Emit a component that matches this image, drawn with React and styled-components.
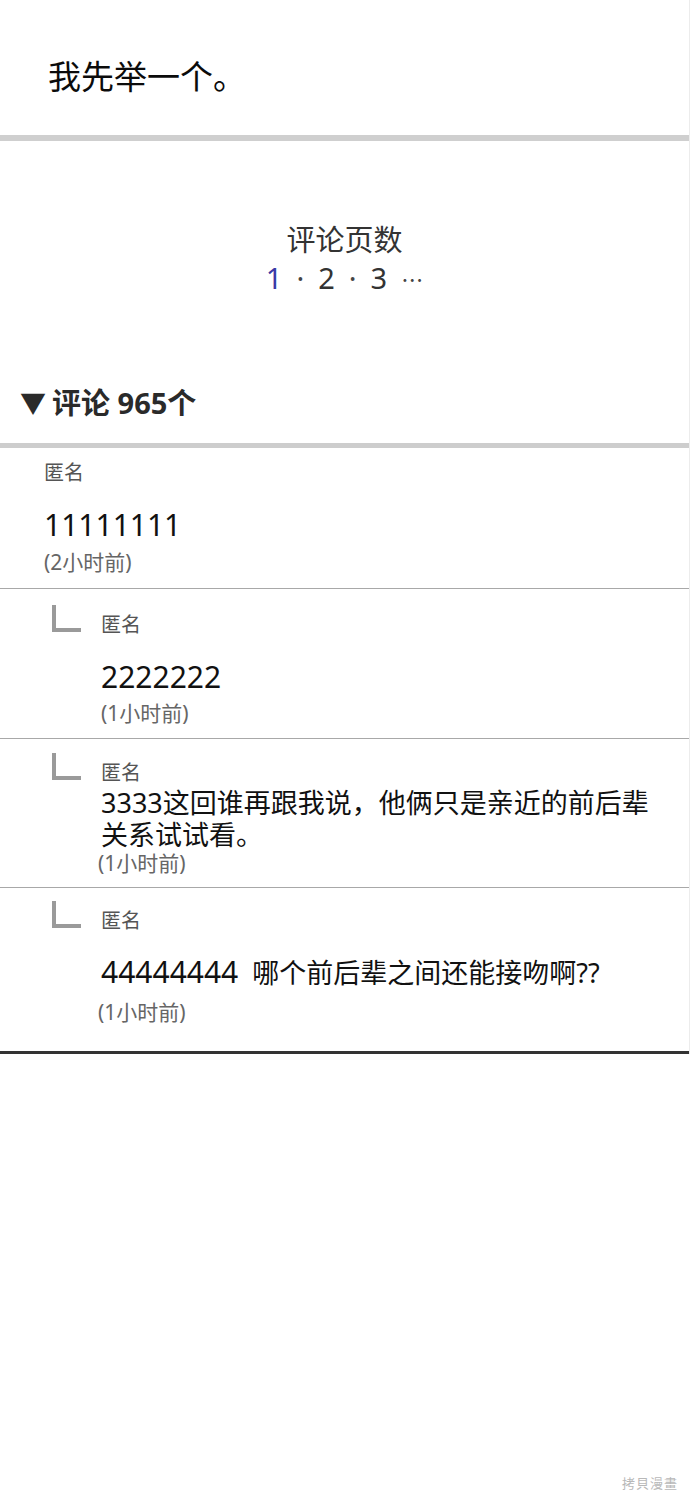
import React from "react";
import styled, { createGlobalStyle } from "styled-components";

// ---------- STYLES ----------
const Global = createGlobalStyle`
  html, body {
    margin: 0;
    padding: 0;
    background: #fff;
  }
  body {
    font-family: "Noto Sans", "Noto Sans CJK SC", sans-serif;
    color: #111;
  }
`;

const Page = styled.div`
  position: relative;
  width: 690px;
  min-height: 1506px;
  background: #fff;
`;

const Panel = styled.div`
  border-right: 1px solid #ececec;
`;

const Post = styled.div`
  padding: 55px 0 40px 48px;
  font-family: "Noto Sans CJK SC", sans-serif;
  font-size: 33px;
  line-height: 40px;
  color: #0b0b0b;
  border-bottom: 6px solid #cfcfcf;
`;

const Pager = styled.div`
  padding: 80px 0 20px;
  border-bottom: 5px solid #cdcdcd;
`;

const PagerTitle = styled.div`
  text-align: center;
  font-size: 29px;
  line-height: 38px;
  color: #333;
`;

const PageNums = styled.div`
  display: flex;
  justify-content: center;
  align-items: center;
  gap: 14px;
  font-size: 29px;
  line-height: 38px;
  color: #333;
`;

const PageNum = styled.span`
  color: ${(p) => (p.$active ? "#3a3aa6" : "#333")};
`;

const Dot = styled.span`
  color: #444;
`;

const More = styled.span`
  font-family: "Noto Sans CJK SC", sans-serif;
  font-size: 22px;
  color: #444;
`;

const Heading = styled.h2`
  margin: 86px 0 0 20px;
  font-size: 29px;
  line-height: 40px;
  font-weight: 700;
  color: #2a2a2a;
  display: flex;
  align-items: center;
  gap: 6px;
`;

const Arrow = styled.span`
  font-size: 26px;
`;

const Comment = styled.div`
  padding: ${(p) => p.$top}px 0 ${(p) => p.$bottom}px ${(p) => (p.$reply ? 52 : 44)}px;
  border-bottom: ${(p) => (p.$last ? "3px solid #333" : "1.5px solid #a8a8a8")};
`;

const Head = styled.div`
  display: flex;
  align-items: flex-end;
`;

const Marker = styled.span`
  width: 25px;
  height: 23px;
  border-left: 4px solid #9a9a9a;
  border-bottom: 4px solid #9a9a9a;
  margin: 0 20px 6px 0;
`;

const Name = styled.div`
  font-size: 20px;
  line-height: 26px;
  color: #555;
`;

const Body = styled.div`
  padding-left: ${(p) => (p.$reply ? 49 : 0)}px;
`;

const Text = styled.div`
  margin-top: ${(p) => p.$gap}px;
  max-width: ${(p) => p.$max || 600}px;
  font-size: ${(p) => p.$size}px;
  line-height: ${(p) => p.$lh}px;
  color: #111;
`;

const Num = styled.span`
  font-size: 30px;
  margin-right: 14px;
`;

const Time = styled.div`
  margin-top: ${(p) => p.$gap}px;
  margin-left: ${(p) => p.$shift || 0}px;
  font-size: 21px;
  line-height: ${(p) => p.$lh || 26}px;
  color: #666;
`;

const Watermark = styled.div`
  position: absolute;
  right: 12px;
  bottom: 14px;
  font-family: "Noto Sans CJK TC", sans-serif;
  font-size: 13px;
  letter-spacing: 1px;
  color: #b8b8b8;
`;

// ---------- DATA ----------
const comments = [
  { id: 1, reply: false, top: 12, bottom: 13, text: "11111111", size: 30, lh: 40, gap: 19, time: "(2小时前)", tgap: 4 },
  { id: 2, reply: true, top: 16, bottom: 12, text: "2222222", size: 30, lh: 40, gap: 19, time: "(1小时前)", tgap: 3 },
  { id: 3, reply: true, top: 14, bottom: 13, text: "3333这回谁再跟我说，他俩只是亲近的前后辈关系试试看。", size: 27, lh: 32, gap: 1, max: 556, time: "(1小时前)", tgap: 1, tlh: 22, shift: -3 },
  { id: 4, reply: true, top: 13, bottom: 26, num: "44444444", text: "哪个前后辈之间还能接吻啊??", size: 27, lh: 40, gap: 18, time: "(1小时前)", tgap: 6, shift: -3, last: true },
];

// ---------- COMPONENT ----------
export default function App() {
  return (
    <Page>
      <Global />

      <Panel>
        {/* POST */}
        <Post>我先举一个。</Post>

        {/* PAGER + HEADING */}
        <Pager>
          <PagerTitle>评论页数</PagerTitle>
          <PageNums>
            <PageNum $active>1</PageNum>
            <Dot>·</Dot>
            <PageNum>2</PageNum>
            <Dot>·</Dot>
            <PageNum>3</PageNum>
            <More>⋯</More>
          </PageNums>
          <Heading>
            <Arrow>▼</Arrow>评论 965个
          </Heading>
        </Pager>

        {/* COMMENTS */}
        {comments.map((c) => (
          <Comment key={c.id} $reply={c.reply} $top={c.top} $bottom={c.bottom} $last={c.last}>
            <Head>
              {c.reply && <Marker />}
              <Name>匿名</Name>
            </Head>
            <Body $reply={c.reply}>
              <Text $gap={c.gap} $size={c.size} $lh={c.lh} $max={c.max}>
                {c.num && <Num>{c.num}</Num>}
                {c.text}
              </Text>
              <Time $gap={c.tgap} $shift={c.shift} $lh={c.tlh}>
                {c.time}
              </Time>
            </Body>
          </Comment>
        ))}
      </Panel>

      <Watermark>拷貝漫畫</Watermark>
    </Page>
  );
}
